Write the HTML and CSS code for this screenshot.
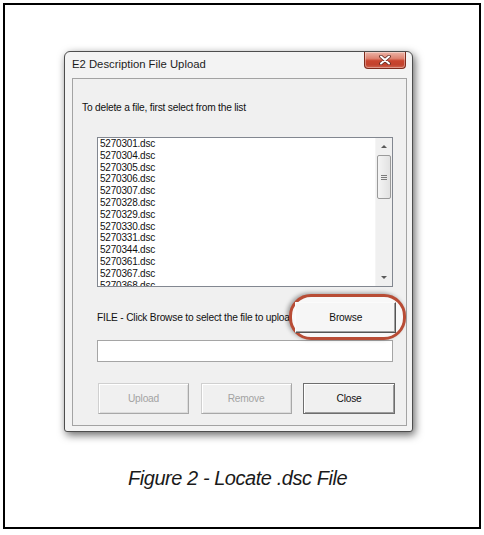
FILE: index.html
```html
<!DOCTYPE html>
<html lang="en">
<head>
    <meta charset="UTF-8">
    <meta name="viewport" content="width=device-width, initial-scale=1.0">
    <title>Figure 2 - Locate .dsc File</title>
    <link rel="stylesheet" href="styles.css">
</head>
<body>
    <div class="page">
        <!-- Dialog screenshot -->
        <div class="dialog">
            <div class="titlebar">
                <span class="title">E2 Description File Upload</span>
                <button class="close-btn" aria-label="Close">
                    <svg width="14" height="10" viewBox="0 0 14 10">
                        <path d="M3 1.5 L11 8.5 M11 1.5 L3 8.5" stroke="#5a2a22" stroke-width="3.6" stroke-linecap="round"/>
                        <path d="M3 1.5 L11 8.5 M11 1.5 L3 8.5" stroke="#ffffff" stroke-width="2" stroke-linecap="round"/>
                    </svg>
                </button>
            </div>

            <div class="client">
                <p class="hint">To delete a file, first select from the list</p>

                <div class="listbox">
                    <ul class="files">
                        <li>5270301.dsc</li>
                        <li>5270304.dsc</li>
                        <li>5270305.dsc</li>
                        <li>5270306.dsc</li>
                        <li>5270307.dsc</li>
                        <li>5270328.dsc</li>
                        <li>5270329.dsc</li>
                        <li>5270330.dsc</li>
                        <li>5270331.dsc</li>
                        <li>5270344.dsc</li>
                        <li>5270361.dsc</li>
                        <li>5270367.dsc</li>
                        <li>5270368.dsc</li>
                    </ul>
                    <div class="vscroll">
                        <span class="arrow arrow-up"></span>
                        <div class="track">
                            <div class="thumb"><span class="grip"></span></div>
                        </div>
                        <span class="arrow arrow-down"></span>
                    </div>
                </div>

                <div class="file-row">
                    <span class="file-label">FILE - Click Browse to select the file to upload</span>
                    <div class="browse-wrap">
                        <span class="ring"></span>
                        <button class="btn browse">Browse</button>
                    </div>
                </div>

                <div class="path-field"></div>

                <div class="actions">
                    <button class="btn" disabled>Upload</button>
                    <button class="btn" disabled>Remove</button>
                    <button class="btn btn-default">Close</button>
                </div>
            </div>
        </div>

        <p class="caption">Figure 2 - Locate .dsc File</p>
    </div>
</body>
</html>
```

FILE: styles.css
```css
body {
    margin: 0;
    background: #fff;
    font-family: "Liberation Sans", Arial, sans-serif;
}
.page {
    box-sizing: border-box;
    width: 478px;
    height: 526px;
    margin: 3px;
    border: 2px solid #000;
    padding-top: 46px;
}

/* window frame */
.dialog {
    box-sizing: border-box;
    width: 349px;
    margin-left: 59px;
    padding: 0 5px 5px 7px;
    background: #f3f3f3;
    border: 1px solid #4d4d4d;
    border-radius: 6px 6px 3px 3px;
    box-shadow: 2px 3px 8px rgba(0, 0, 0, 0.6);
}
.titlebar {
    display: flex;
    justify-content: space-between;
    align-items: flex-start;
    height: 26px;
}
.title {
    line-height: 25px;
    font-size: 11.3px;
    color: #1c1c1c;
}
.close-btn {
    display: flex;
    align-items: center;
    justify-content: center;
    width: 42px;
    height: 17px;
    margin-right: 1px;
    padding: 0;
    border: 1px solid #7d2a1c;
    border-top: none;
    border-radius: 0 0 4px 4px;
    background: linear-gradient(#ecb5a8 0%, #de8371 40%, #c9442e 55%, #c2422d 80%, #cf6651 100%);
    box-shadow: inset 0 0 0 1px rgba(255, 255, 255, 0.35);
}

/* client area */
.client {
    box-sizing: border-box;
    height: 348px;
    border: 1px solid #a3a3a3;
    background: #f0f0f0;
    font-size: 10px;
    letter-spacing: -0.2px;
    color: #111;
}
.hint {
    margin: 23px 0 0 9px;
    line-height: 12px;
    font-size: 10.2px;
}
.listbox {
    display: flex;
    box-sizing: border-box;
    width: 296px;
    height: 150px;
    margin: 23px 0 0 24px;
    border: 1px solid #828790;
    background: #fff;
}
.files {
    flex: 1;
    margin: 0;
    padding: 0 0 0 2px;
    list-style: none;
    overflow: hidden;
    line-height: 11.8px;
}
.vscroll {
    display: flex;
    flex-direction: column;
    width: 16px;
    background: #f0f0f0;
    border-left: 1px solid #f5f5f5;
}
.arrow {
    height: 17px;
    display: flex;
    align-items: center;
    justify-content: center;
}
.arrow::before {
    content: "";
    border-left: 3px solid transparent;
    border-right: 3px solid transparent;
}
.arrow-up::before {
    border-bottom: 3px solid #5a5a5a;
}
.arrow-down::before {
    border-top: 3px solid #5a5a5a;
}
.track {
    flex: 1;
}
.thumb {
    display: flex;
    align-items: center;
    justify-content: center;
    height: 42px;
    margin: 0 1px;
    border: 1px solid #9a9a9a;
    border-radius: 2px;
    background: linear-gradient(90deg, #f4f4f4, #e2e2e2);
}
.grip {
    width: 6px;
    height: 5px;
    background: repeating-linear-gradient(#7b7b7b 0 1px, transparent 1px 2px);
}

/* browse row */
.file-row {
    display: flex;
    justify-content: space-between;
    align-items: center;
    margin: 15px 12px 0 24px;
    height: 31px;
}
.file-label {
    white-space: nowrap;
    font-size: 10.2px;
}
.browse-wrap {
    position: relative;
    width: 101px;
    height: 31px;
}
.ring {
    position: absolute;
    left: -6px;
    top: -8px;
    width: 111px;
    height: 40px;
    border: 3px solid #b84c35;
    border-radius: 22px;
    background: #f8f8f8;
    box-shadow: -2px -1px 4px rgba(0, 0, 0, 0.35);
}
.btn {
    position: relative;
    box-sizing: border-box;
    width: 91px;
    height: 31px;
    padding: 0;
    font-family: "Liberation Sans", Arial, sans-serif;
    font-size: 10.2px;
    letter-spacing: -0.2px;
    color: #111;
    background: #f0f0f0;
    border: 1px solid;
    border-color: #fbfbfb #555 #555 #fbfbfb;
    box-shadow: inset -1px -1px 0 #a0a0a0;
}
.browse {
    width: 101px;
    background: #f6f6f6;
}
.btn:disabled {
    color: #a3a3a3;
    border-color: #d0d0d0 #a8a8a8 #a8a8a8 #d0d0d0;
    box-shadow: inset 1px 1px 0 #fff, inset -1px -1px 0 #dcdcdc;
}
.btn-default {
    width: 92px;
    border-color: #6e6e6e;
    box-shadow: inset 1px 1px 0 #fff, inset -1px -1px 0 #9c9c9c;
}
.path-field {
    box-sizing: border-box;
    width: 296px;
    height: 22px;
    margin: 7px 0 0 24px;
    border: 1px solid #a5a5a5;
    background: #fff;
}
.actions {
    display: flex;
    gap: 11.5px;
    margin: 21px 0 0 25px;
}

/* figure caption */
.caption {
    margin: 34px 0 0 123px;
    line-height: 24px;
    font-size: 20px;
    font-style: italic;
    letter-spacing: -0.45px;
    color: #1a1a1a;
}
```
